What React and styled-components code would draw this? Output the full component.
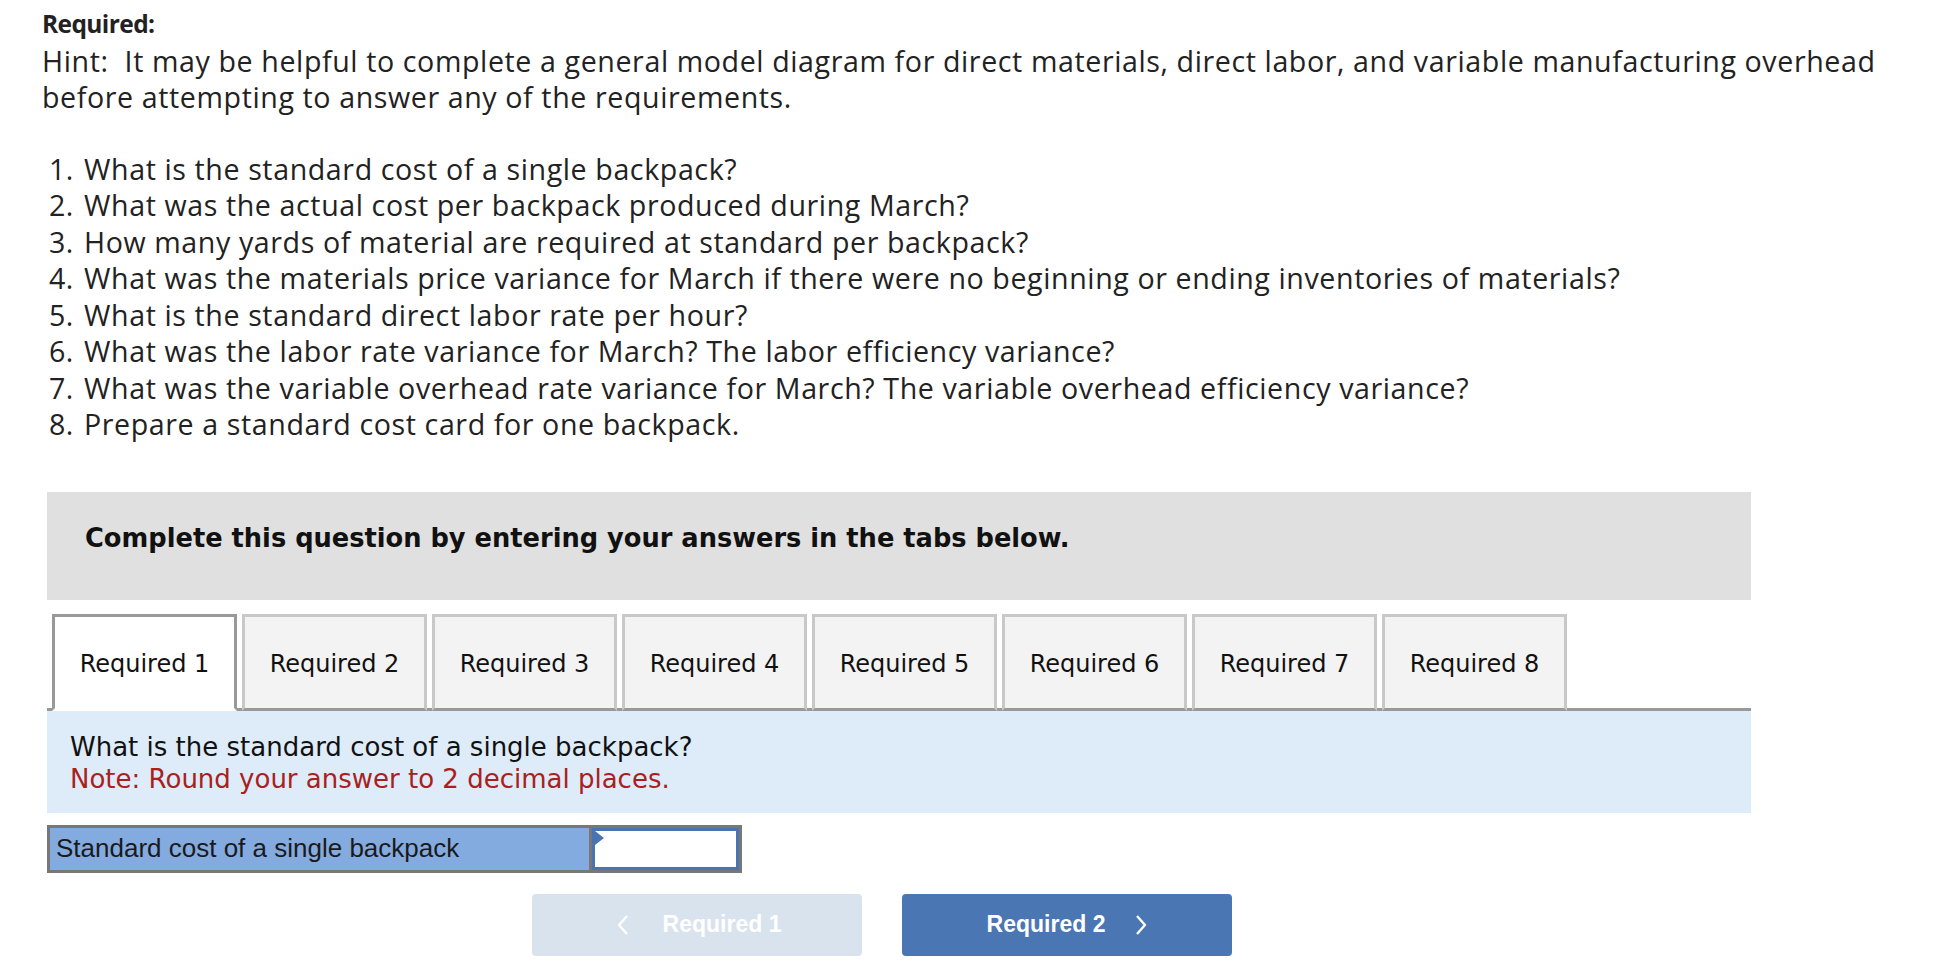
import React from "react";
import styled, { createGlobalStyle } from "styled-components";

const GlobalStyle = createGlobalStyle`
  html, body {
    margin: 0;
    padding: 0;
    background: #ffffff;
  }
  body {
    font-family: "Open Sans", "Liberation Sans", sans-serif;
    color: #222222;
  }
`;

const Page = styled.div`
  width: 1958px;
  padding-top: 6px;
  padding-bottom: 20px;
`;

const Intro = styled.section`
  padding-left: 42px;
  font-size: 28.6px;
  letter-spacing: 0.6px;
  line-height: 36.5px;
`;

const Heading = styled.div`
  font-weight: 700;
  font-size: 24.5px;
  letter-spacing: -0.6px;
`;

const Hint = styled.p`
  margin: 0;
  width: 1890px;
`;

const Questions = styled.ol`
  margin: 35px 0 0;
  padding-left: 40px;

  li {
    padding-left: 2px;
  }
`;

const Work = styled.section`
  margin: 49px 0 0 47px;
  width: 1704px;
`;

const Banner = styled.div`
  height: 108px;
  background: #e0e0e0;
  padding: 0 0 0 38px;
  display: flex;
  align-items: center;
  box-sizing: border-box;
  font-family: "DejaVu Sans", Verdana, sans-serif;
  font-weight: 700;
  font-size: 25.7px;
  color: #111111;

  span {
    position: relative;
    top: -8px;
  }
`;

const TabRow = styled.div`
  display: flex;
  gap: 5px;
  margin-top: 14px;
  padding-left: 5px;
  border-bottom: 3px solid #999999;
`;

const Tab = styled.button`
  width: 185px;
  height: 97px;
  box-sizing: border-box;
  margin-bottom: -3px;
  padding: 4px 0 0;
  position: relative;
  z-index: ${(p) => (p.$active ? 2 : 1)};
  background: ${(p) => (p.$active ? "#ffffff" : "#f3f3f3")};
  border: 3px solid ${(p) => (p.$active ? "#999999" : "#c8c8c8")};
  border-bottom: ${(p) => (p.$active ? "3px solid #ffffff" : "3px solid #999999")};
  font-family: "DejaVu Sans", Verdana, sans-serif;
  font-size: 24px;
  color: #111111;
  cursor: pointer;
`;

const Panel = styled.div`
  background: #deebf8;
  height: 102px;
  box-sizing: border-box;
  padding: 20px 0 0 23px;
  font-family: "DejaVu Sans", Verdana, sans-serif;
  font-size: 26px;
  line-height: 32px;
  color: #111111;
`;

const Note = styled.div`
  color: #a8211c;
`;

const AnswerRow = styled.div`
  margin-top: 12px;
  display: flex;
  width: 695px;
  height: 48px;
  box-sizing: border-box;
  border: 3px solid #777777;
`;

const AnswerLabel = styled.div`
  width: 542px;
  background: #84abdf;
  display: flex;
  align-items: center;
  padding-left: 6px;
  box-sizing: border-box;
  font-family: "Liberation Sans", Arial, sans-serif;
  font-size: 26px;
  color: #1a1a1a;
  border-right: 3px solid #777777;
`;

const AnswerCell = styled.div`
  flex: 1;
  position: relative;
  background: #ffffff;
  border: 3px solid #4a74b0;

  &::before {
    content: "";
    position: absolute;
    left: 0;
    top: 0;
    border-top: 7px solid transparent;
    border-bottom: 7px solid transparent;
    border-left: 9px solid #4a74b0;
  }
`;

const Nav = styled.div`
  display: flex;
  gap: 40px;
  margin: 21px 0 0 485px;
`;

const NavButton = styled.button`
  width: 330px;
  height: 62px;
  border: none;
  border-radius: 4px;
  background: ${(p) => (p.$disabled ? "#d9e3ee" : "#4a76b4")};
  color: #ffffff;
  font-family: "Liberation Sans", Arial, sans-serif;
  font-weight: 700;
  font-size: 23px;
  display: flex;
  align-items: center;
  justify-content: center;
  gap: ${(p) => (p.$disabled ? "34px" : "30px")};
  padding: ${(p) => (p.$disabled ? "0 0 0 4px" : "0")};
  cursor: ${(p) => (p.$disabled ? "default" : "pointer")};

  svg {
    display: block;
  }
`;

const Chevron = ({ dir }) => (
  <svg width="12" height="22" viewBox="0 0 12 22">
    <polyline
      points={dir === "left" ? "10,2 2,11 10,20" : "2,2 10,11 2,20"}
      fill="none"
      stroke="#ffffff"
      strokeWidth="2.4"
      strokeLinejoin="round"
    />
  </svg>
);

const questions = [
  "What is the standard cost of a single backpack?",
  "What was the actual cost per backpack produced during March?",
  "How many yards of material are required at standard per backpack?",
  "What was the materials price variance for March if there were no beginning or ending inventories of materials?",
  "What is the standard direct labor rate per hour?",
  "What was the labor rate variance for March? The labor efficiency variance?",
  "What was the variable overhead rate variance for March? The variable overhead efficiency variance?",
  "Prepare a standard cost card for one backpack.",
];

const tabs = [1, 2, 3, 4, 5, 6, 7, 8];

const App = () => {
  return (
    <Page>
      <GlobalStyle />
      <Intro>
        <Heading>Required:</Heading>
        <Hint>
          Hint:&nbsp; It may be helpful to complete a general model diagram for direct materials, direct
          labor, and variable manufacturing overhead before attempting to answer any of the requirements.
        </Hint>
        <Questions>
          {questions.map((q) => (
            <li key={q}>{q}</li>
          ))}
        </Questions>
      </Intro>

      <Work>
        <Banner>
          <span>Complete this question by entering your answers in the tabs below.</span>
        </Banner>

        <TabRow>
          {tabs.map((n) => (
            <Tab key={n} $active={n === 1}>
              Required {n}
            </Tab>
          ))}
        </TabRow>

        <Panel>
          <div>What is the standard cost of a single backpack?</div>
          <Note>Note: Round your answer to 2 decimal places.</Note>
        </Panel>

        <AnswerRow>
          <AnswerLabel>Standard cost of a single backpack</AnswerLabel>
          <AnswerCell />
        </AnswerRow>

        <Nav>
          <NavButton $disabled>
            <Chevron dir="left" />
            <span>Required 1</span>
          </NavButton>
          <NavButton>
            <span>Required 2</span>
            <Chevron dir="right" />
          </NavButton>
        </Nav>
      </Work>
    </Page>
  );
};

export default App;
